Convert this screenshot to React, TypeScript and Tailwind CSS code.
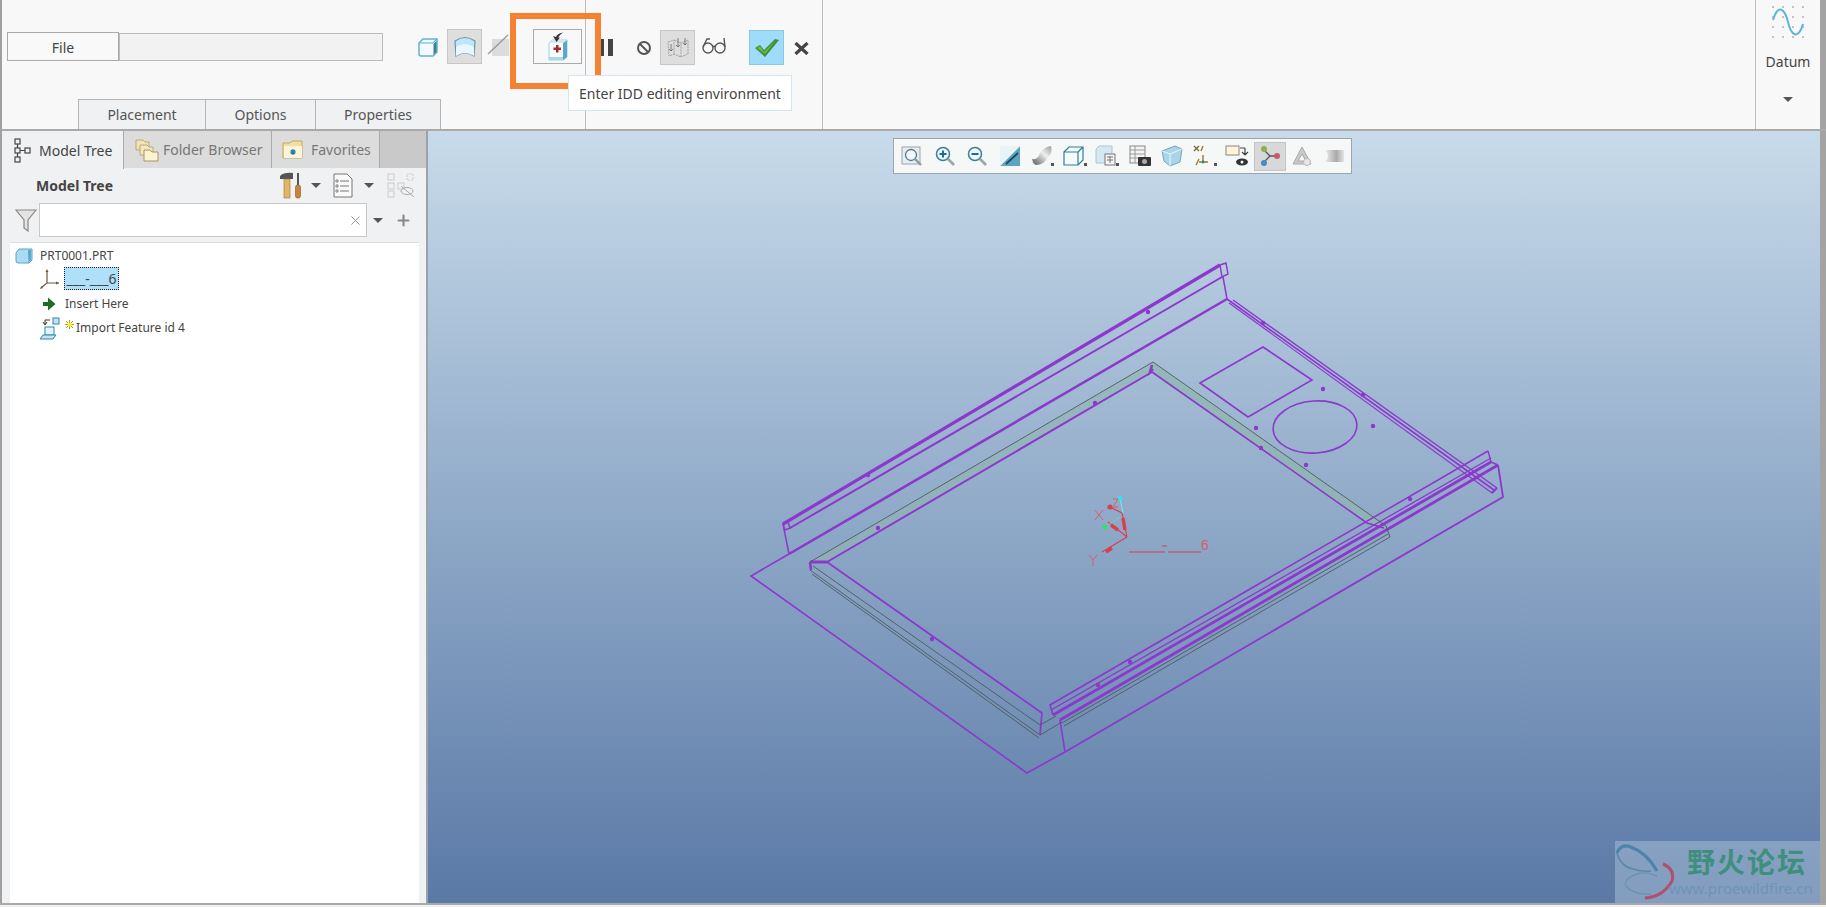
import React from 'react';
import { Plus, X } from 'lucide-react';

const font = "font-['Noto_Sans','Open_Sans',sans-serif]";

const Caret = () => <div className="w-0 h-0 border-x-[5px] border-x-transparent border-t-[5px] border-t-[#555]" />;

const CubeIcon = () => (
  <svg width="20" height="19" viewBox="0 0 20 19" fill="none">
    <path d="M1 5 L5 1 H19 V14 L15 18 H3 Q1 18 1 16 Z" fill="#f2fafd" stroke="#5fb4cf" strokeWidth="1.5" />
    <path d="M1 5 H15 L19 1" stroke="#5fb4cf" strokeWidth="1.2" />
    <path d="M15.5 6 L18.5 3 V14 L15.5 17 Z" fill="#3f7f98" />
  </svg>
);

const SurfaceIcon = () => (
  <svg width="24" height="24" viewBox="0 0 24 24" fill="none">
    <path d="M2 6 Q12 -1 22 6 L21 21 Q12 15 3 21 Z" fill="#bfe6f6" stroke="#6b97a8" strokeWidth="1.2" />
    <path d="M3 12 Q12 6 21 12 L21 21 Q12 15 3 21 Z" fill="#e9f7fc" />
  </svg>
);

const SlashIcon = () => (
  <svg width="24" height="24" viewBox="0 0 24 24" fill="none">
    <rect x="5" y="6" width="17" height="17" fill="#dcdcdc" />
    <path d="M1 21 L21 2" stroke="#9a9a9a" strokeWidth="1.4" />
  </svg>
);

const IddIcon = () => (
  <svg width="22" height="30" viewBox="0 0 22 30" fill="none">
    <path d="M2 11 L5 8 H20 V25 L17 28 H2 Z" fill="#f8fcfd" stroke="#8cc4da" strokeWidth="0.8" />
    <path d="M16 11 L20 8 V25 L16 28 Z" fill="#5aa7c7" />
    <path d="M2 25 H16 V28 H2 Z" fill="#a8d8ea" />
    <path d="M2 11 L5 8 H20 L16 11 Z" fill="#cfe9f4" />
    <path d="M6.5 15.5 h2.5 v-2.5 h2.5 v2.5 h2.5 v2.5 h-2.5 v2.5 h-2.5 v-2.5 h-2.5 Z" fill="#a8262d" />
    <path d="M16 0.5 Q10 1.5 9 5 L6 4 L9.5 10 L13 5.5 L11 5.5 Q12.5 3 16 0.5 Z" fill="#333" />
  </svg>
);

const MeshIcon = () => (
  <svg width="26" height="24" viewBox="0 0 26 24" fill="none" stroke="#8a8a8a" strokeWidth="0.7">
    <path d="M3 6 L9 4 V18 L4 20 Z M9 4 L16 7 V21 L9 18 M16 7 L23 4 V18 L16 21" strokeDasharray="2 0.8" />
    <path d="M13 2 V11 M11 9 L13 11 L15 9 M20 2 V9 M18 7 L20 9 L22 7 M6 8 V15 M4 13 L6 15 L8 13" stroke="#555" />
  </svg>
);

const Glasses = () => (
  <svg width="24" height="18" viewBox="0 0 24 18" fill="none" stroke="#555" strokeWidth="1.4">
    <circle cx="6" cy="11" r="5" />
    <circle cx="18" cy="11" r="5" />
    <path d="M11 10 Q12 8.5 13 10 M1 10 L5 2 H8 M23 10 L22 1" />
  </svg>
);

const ZoomGlass = ({ mark }: { mark?: string }) => (
  <svg width="22" height="22" viewBox="0 0 22 22" fill="none">
    <circle cx="9" cy="9" r="6.5" fill="#eef7fa" stroke="#3f8199" strokeWidth="1.5" />
    <path d="M14 14 L20 20" stroke="#9aa6ab" strokeWidth="2.6" />
    {mark === '+' && <path d="M5.5 9 H12.5 M9 5.5 V12.5" stroke="#1f6b8a" strokeWidth="2" />}
    {mark === '-' && <path d="M5.5 9 H12.5" stroke="#1f6b8a" strokeWidth="2" />}
  </svg>
);

const viewIcons: React.ReactNode[] = [
  <svg key="refit" width="22" height="22" viewBox="0 0 22 22" fill="none">
    <rect x="1" y="2" width="18" height="17" fill="#e6eef2" stroke="#9aa6ab" />
    <circle cx="10" cy="10" r="5.5" fill="#f2f8fa" stroke="#55798a" strokeWidth="1.3" />
    <path d="M14 14 L20 20" stroke="#8f9a9f" strokeWidth="2.4" />
  </svg>,
  <ZoomGlass key="in" mark="+" />,
  <ZoomGlass key="out" mark="-" />,
  <svg key="repaint" width="22" height="22" viewBox="0 0 22 22" fill="none">
    <rect x="1" y="1" width="20" height="20" fill="#f7fafb" />
    <path d="M21 1 V21 H1 Z" fill="#5aa5c2" />
    <path d="M1 1 H21 L1 21 Z" fill="#e8f3f7" />
    <path d="M7 19 L19 8" stroke="#25475a" strokeWidth="1.8" />
  </svg>,
  <svg key="shade" width="24" height="22" viewBox="0 0 24 22" fill="none">
    <defs>
      <linearGradient id="sh" x1="0" y1="1" x2="1" y2="0">
        <stop offset="0" stopColor="#555" />
        <stop offset="0.6" stopColor="#eee" />
        <stop offset="1" stopColor="#999" />
      </linearGradient>
    </defs>
    <path d="M2 14 Q8 15 10 8 Q14 2 21 1 Q23 8 18 12 Q14 20 6 20 Q3 19 2 14 Z" fill="url(#sh)" />
    <rect x="21" y="18" width="3" height="3" fill="#555" />
  </svg>,
  <svg key="cube" width="24" height="22" viewBox="0 0 24 22" fill="none" stroke="#2f7f99" strokeWidth="1.2">
    <path d="M1 7 L6 2 H20 V15 L15 20 H1 Z M1 7 H15 V20 M15 7 L20 2" fill="#f5fafc" />
    <rect x="21" y="18" width="3" height="3" fill="#555" stroke="none" />
  </svg>,
  <svg key="views" width="24" height="22" viewBox="0 0 24 22" fill="none">
    <path d="M1 4 L4 1 H17 V18 H1 Z" fill="#d3e8f1" stroke="#a8c8d6" />
    <rect x="10" y="9" width="10" height="11" fill="#f4f4f4" stroke="#777" />
    <path d="M12 12 H18 M12 15 H18 M15 11 V18" stroke="#777" />
    <rect x="21" y="18" width="3" height="3" fill="#555" />
  </svg>,
  <svg key="cam" width="22" height="22" viewBox="0 0 22 22" fill="none">
    <rect x="1" y="1" width="15" height="17" fill="#f4f4f4" stroke="#888" />
    <path d="M1 5 H16 M1 9 H16 M1 13 H16 M6 1 V18" stroke="#999" />
    <rect x="9" y="12" width="13" height="9" rx="1" fill="#333" />
    <circle cx="15.5" cy="16.5" r="2.5" fill="#aaa" />
  </svg>,
  <svg key="section" width="22" height="22" viewBox="0 0 22 22" fill="none">
    <path d="M1 6 L14 1 L21 4 L19 17 L9 21 L3 16 Z" fill="#a9d5e7" stroke="#6ea8bf" />
    <path d="M1 6 L9 9 L21 4 M9 9 L9 21" stroke="#eaf6fb" />
  </svg>,
  <svg key="axes" width="24" height="22" viewBox="0 0 24 22" fill="none" strokeWidth="1.4">
    <path d="M1 1 L6 6 M6 1 L1 6" stroke="#7a6a3a" />
    <path d="M10 1 L8 6 M3 20 L6 14 M10 10 V17 M6 17 H15" stroke="#9a7a2a" />
    <circle cx="10" cy="17" r="1.4" fill="#2f7f99" />
    <rect x="21" y="18" width="3" height="3" fill="#555" stroke="none" />
  </svg>,
  <svg key="eye" width="24" height="22" viewBox="0 0 24 22" fill="none">
    <rect x="1" y="1" width="13" height="9" fill="#fdf5d8" stroke="#888" />
    <path d="M20 3 H15 M20 3 V9 M17 7 L20 10 L23 7" stroke="#444" strokeWidth="1.2" />
    <ellipse cx="17" cy="17" rx="6" ry="3.5" fill="#333" />
    <circle cx="17" cy="17" r="1.5" fill="#fff" />
  </svg>,
  <svg key="comp" width="22" height="22" viewBox="0 0 22 22" fill="none">
    <path d="M5 5 L11 11 L17 11 M11 11 L5 17" stroke="#555" strokeWidth="1.3" />
    <circle cx="5" cy="4" r="3" fill="#8db04a" />
    <circle cx="18" cy="11" r="3" fill="#c95a68" />
    <circle cx="5" cy="18" r="3" fill="#3f8fc0" />
  </svg>,
  <svg key="tri" width="22" height="22" viewBox="0 0 22 22" fill="none">
    <path d="M11 2 L20 19 H2 Z M11 9 L15 16 H7 Z" fill="#c9c9c9" fillRule="evenodd" stroke="#aaa" />
    <circle cx="16" cy="17" r="3.5" fill="#e8e8e8" stroke="#bbb" />
  </svg>,
  <svg key="flat" width="22" height="22" viewBox="0 0 22 22" fill="none">
    <defs>
      <linearGradient id="fl" x1="0" y1="0" x2="1" y2="0">
        <stop offset="0" stopColor="#eee" />
        <stop offset="0.6" stopColor="#aaa" />
        <stop offset="1" stopColor="#e4e4e4" />
      </linearGradient>
    </defs>
    <path d="M1 5 H20 V17 H1 Q7 11 1 5 Z" fill="url(#fl)" />
  </svg>,
];

const Ribbon = () => (
  <div className="h-[131px] shrink-0 flex bg-[#f8f8f8] border-l-2 border-l-[#a0a0a0] border-b-2 border-b-[#a9a9a9] relative">
    <div className="w-[584px] shrink-0 border-r border-r-[#bdbdbd] flex flex-col">
      <div className="h-[99px] pt-[32px] pl-[5px] flex">
        <div className="w-[112px] h-[29px] border border-[#aaa] bg-[#f9f9f9] flex items-center justify-center text-[14px] text-[#444] pt-[2px]">File</div>
        <div className="w-[264px] h-[28px] mt-[1px] border border-[#bbb] bg-[#f2f2f2]" />
        <div className="flex items-start">
          <div className="ml-[35px] mt-[6px]"><CubeIcon /></div>
          <div className="ml-[9px] -mt-[3px] w-[35px] h-[35px] bg-[#dedede] border border-[#c6c6c6] flex items-center justify-center"><SurfaceIcon /></div>
          <div className="ml-[5px] mt-[1px]"><SlashIcon /></div>
          <div className="ml-[22px] -mt-[3px] w-[49px] h-[35px] border border-[#aaa] flex items-center justify-center"><IddIcon /></div>
        </div>
      </div>
      <div className="flex pl-[76px] h-[30px] text-[14px] text-[#555]">
        <div className="w-[128px] bg-[#f0f1f2] border border-b-0 border-[#b5b5b5] flex items-center justify-center">Placement</div>
        <div className="w-[110px] bg-[#f0f1f2] border-t border-r border-[#b5b5b5] flex items-center justify-center">Options</div>
        <div className="w-[125px] bg-[#f0f1f2] border-t border-r border-[#b5b5b5] flex items-center justify-center">Properties</div>
      </div>
    </div>
    <div className="w-[237px] shrink-0 border-r border-r-[#bdbdbd] flex items-start pt-[30px]">
      <div className="ml-[13px] mt-[9px] flex gap-[4px]">
        <div className="w-[5px] h-[17px] bg-[#444]" />
        <div className="w-[5px] h-[17px] bg-[#444]" />
      </div>
      <svg className="ml-[23px] mt-[10px]" width="16" height="16" viewBox="0 0 16 16" fill="none" stroke="#555" strokeWidth="2">
        <circle cx="8" cy="8" r="6" />
        <path d="M4 4 L12 12" />
      </svg>
      <div className="ml-[8px] w-[35px] h-[35px] bg-[#dedede] border border-[#c6c6c6] flex items-center justify-center"><MeshIcon /></div>
      <div className="ml-[7px] mt-[7px]"><Glasses /></div>
      <div className="ml-[23px] w-[35px] h-[35px] bg-[#9fdbfb] border border-[#8cc8e6] flex items-center justify-center">
        <svg width="26" height="22" viewBox="0 0 26 22">
          <path d="M1 11 L6 8 L10 13 L21 2 L25 3 L11 20 Z" fill="#3c8f3f" />
          <path d="M3 11 L6 9.5 L10 15 L22 3 L11 17 Z" fill="#78bb3c" />
        </svg>
      </div>
      <svg className="ml-[10px] mt-[12px]" width="15" height="13" viewBox="0 0 15 13" fill="none" stroke="#444" strokeWidth="3.2">
        <path d="M1.5 1 L13.5 12 M13.5 1 L1.5 12" />
      </svg>
    </div>
    <div className="flex-1" />
    <div className="w-[65px] shrink-0 border-l border-l-[#bdbdbd] flex flex-col items-center relative">
      <svg className="mt-[5px]" width="34" height="34" viewBox="0 0 34 34" fill="none">
        {[2, 12, 22, 32].map((x) => [2, 12, 22, 32].map((y) => <circle key={`${x}-${y}`} cx={x} cy={y} r="0.7" fill="#666" />))}
        <path d="M2 15 C7 -2 14 4 17 17 C20 30 27 36 32 19" stroke="#5cb8d6" strokeWidth="2" />
      </svg>
      <span className="mt-[12px] text-[14px] text-[#444]">Datum</span>
      <div className="mt-[25px]"><Caret /></div>
    </div>
    <div className="w-[6px] shrink-0 bg-[#a3a3a3]" />

    <div className="absolute left-[508px] top-[13px] w-[91px] h-[76px] border-[6px] border-[#f58232]" />
    <div className="absolute left-[566px] top-[75px] w-[224px] h-[36px] bg-white border border-[#d3e6ee] flex items-center pl-[10px] text-[14px] text-[#444] whitespace-nowrap">Enter IDD editing environment</div>
  </div>
);

const TreeIcon = () => (
  <svg width="17" height="25" viewBox="0 0 17 25" fill="none" stroke="#444" strokeWidth="1.2">
    <rect x="1" y="1" width="5" height="5" />
    <rect x="1" y="10" width="5" height="5" />
    <rect x="1" y="19" width="5" height="5" />
    <rect x="11" y="10" width="5" height="5" />
    <path d="M3.5 6 V10 M3.5 15 V19 M6 12.5 H11" />
  </svg>
);

const FolderIcon = () => (
  <svg width="24" height="24" viewBox="0 0 24 24">
    <path d="M1 2 H8 L10 4 H14 V12 H1 Z" fill="#f1e3b5" stroke="#b8a878" />
    <path d="M5 7 H12 L14 9 H18 V17 H5 Z" fill="#f4e7bd" stroke="#b8a878" />
    <path d="M9 12 H15 L17 14 H23 V23 H9 Z" fill="#fbf2d2" stroke="#a99461" />
  </svg>
);

const FavIcon = () => (
  <svg width="22" height="20" viewBox="0 0 22 20">
    <path d="M1 3 H8 L10 1 H20 V18 H1 Z" fill="#f2dea3" stroke="#c0a668" />
    <rect x="2" y="6" width="18" height="12" fill="#fff4d6" />
    <path d="M11 9 V15 M8 12 H14 M9 10 L13 14 M13 10 L9 14" stroke="#1d7da8" strokeWidth="1.2" />
  </svg>
);

const HammerIcon = () => (
  <svg width="23" height="27" viewBox="0 0 23 27">
    <path d="M1 4 Q5 0 14 1 V7 H1 Z" fill="#555" />
    <rect x="5" y="7" width="6" height="19" fill="#e0b56c" stroke="#9a7433" strokeWidth="0.6" />
    <rect x="18" y="1" width="2" height="12" fill="#555" />
    <rect x="16.5" y="13" width="5" height="13" rx="2" fill="#c8843c" stroke="#8a5a25" strokeWidth="0.6" />
  </svg>
);

const ListIcon = () => (
  <svg width="20" height="25" viewBox="0 0 20 25" fill="#fafafa" stroke="#777">
    <path d="M1 1 H14 L19 6 V24 H1 Z" />
    <path d="M7 8 H16 M7 13 H16 M7 18 H16" />
    <circle cx="4" cy="8" r="1.2" />
    <circle cx="4" cy="13" r="1.2" />
    <circle cx="4" cy="18" r="1.2" />
  </svg>
);

const HideIcon = () => (
  <svg width="28" height="25" viewBox="0 0 28 25" fill="none" stroke="#ccc">
    <rect x="1" y="1" width="6" height="6" />
    <rect x="1" y="10" width="6" height="6" />
    <rect x="1" y="18" width="6" height="6" />
    <rect x="11" y="10" width="6" height="6" />
    <rect x="20" y="1" width="6" height="6" strokeDasharray="2 1" />
    <ellipse cx="20" cy="18" rx="6" ry="3.5" stroke="#aaa" />
    <path d="M14 13 L27 24" stroke="#aaa" />
  </svg>
);

const SidePanel = () => (
  <div className="w-[426px] shrink-0 flex flex-col bg-[#f0f1f2] border-r-2 border-r-[#9ba3aa]">
    <div className="h-[37px] shrink-0 flex bg-[#c9c9c9] text-[14px]">
      <div className="w-[122px] -mb-px bg-[#f0f1f2] border-r border-r-[#aaa] flex items-center pl-[12px] gap-[8px] text-[#444]">
        <TreeIcon />
        Model Tree
      </div>
      <div className="w-[148px] bg-[#dcdcdc] border-r border-r-[#aaa] flex items-center pl-[11px] gap-[4px] text-[#777]">
        <FolderIcon />
        Folder Browser
      </div>
      <div className="w-[108px] bg-[#dcdcdc] border-r border-r-[#aaa] flex items-center pl-[10px] gap-[7px] text-[#777]">
        <FavIcon />
        Favorites
      </div>
    </div>
    <div className="h-[35px] shrink-0 flex items-center">
      <span className="ml-[34px] text-[14px] font-bold text-[#444]">Model Tree</span>
      <div className="ml-[166px]"><HammerIcon /></div>
      <div className="ml-[9px]"><Caret /></div>
      <div className="ml-[12px]"><ListIcon /></div>
      <div className="ml-[11px]"><Caret /></div>
      <div className="ml-[13px]"><HideIcon /></div>
    </div>
    <div className="h-[34px] shrink-0 flex items-center">
      <svg className="ml-[13px]" width="22" height="24" viewBox="0 0 22 24" fill="#e4e4e4" stroke="#888" strokeWidth="1.2">
        <path d="M1 2 H21 L13 12 V23 L9 20 V12 Z" />
      </svg>
      <div className="ml-[2px] w-[328px] h-[34px] bg-white border border-[#c8c8c8] flex items-center justify-end pr-[3px]">
        <X size={15} strokeWidth={1.4} color="#888" />
      </div>
      <div className="ml-[6px]"><Caret /></div>
      <Plus className="ml-[12px]" size={17} strokeWidth={3} color="#888" />
    </div>
    <div className="flex-1 mt-[5px] ml-[8px] mr-[7px] bg-white border-t border-t-[#ddd] text-[12px] text-[#444] pt-[3px]">
      <div className="flex items-center h-[19px] pl-[5px]">
        <svg width="18" height="16" viewBox="0 0 18 16">
          <path d="M1 5 L4 1 H17 V12 L14 15 H3 Q1 15 1 13 Z" fill="#a9dcf2" stroke="#57a6c7" />
          <path d="M13 2 H16 V12 L13.5 14.5 Z" fill="#5aa7c7" />
        </svg>
        <span className="ml-[7px]">PRT0001.PRT</span>
      </div>
      <div className="flex items-center h-[26px] pl-[29px] pt-[1px]">
        <svg width="21" height="22" viewBox="0 0 21 22" fill="none" stroke="#6b5a3a" strokeWidth="1.2">
          <path d="M8 3 V15 L2 20 M8 15 H20" />
          <path d="M8 1 L6.5 4 H9.5 Z M20 15 L17 13.5 V16.5 Z M1 21 L4 20 L2.5 18 Z" fill="#6b5a3a" stroke="none" />
        </svg>
        <div className="ml-[4px] w-[55px] h-[23px] bg-[#aee0fa] border border-dotted border-[#223] flex items-center justify-center text-[14px]">___-___6</div>
      </div>
      <div className="flex items-center h-[25px] pl-[32px]">
        <svg width="14" height="14" viewBox="0 0 14 14"><path d="M1 5 H6 V0.5 L13.5 7 L6 13.5 V9 H1 Z" fill="#1f6e1f" /></svg>
        <span className="ml-[9px]">Insert Here</span>
      </div>
      <div className="flex items-center h-[24px] pl-[29px]">
        <svg width="21" height="23" viewBox="0 0 21 23" fill="none">
          <rect x="14" y="1" width="6" height="6" fill="#bfe4f3" stroke="#2f86ad" />
          <rect x="6" y="10" width="9" height="8" fill="#e7f5fb" stroke="#2f86ad" />
          <path d="M1 22 L4 18 H17 L14 22 Z" fill="#bfe4f3" stroke="#2f86ad" />
          <path d="M11 3 H6 V7 M4 5 L6 8 L8 5" stroke="#333" />
        </svg>
        <svg className="ml-[5px] -mt-[8px]" width="9" height="9" viewBox="0 0 9 9" stroke="#a8a000" strokeWidth="1">
          <path d="M4.5 0 V9 M0 4.5 H9 M1 1 L8 8 M8 1 L1 8" />
          <circle cx="4.5" cy="4.5" r="2" fill="#f5ee2a" stroke="none" />
        </svg>
        <span className="ml-[2px]">Import Feature id 4</span>
      </div>
    </div>
  </div>
);

const PURPLE = '#8c38cc';

const dots = [
  [1323, 389], [1373, 426], [1256, 428], [1306, 465], [1263, 323], [1363, 395], [1261, 448],
  [1095, 403], [878, 528], [932, 639], [1098, 685], [1130, 662], [1410, 499], [868, 475], [1148, 312],
];

const Model = () => (
  <svg className="absolute inset-0" width="1392" height="772" viewBox="428 131 1392 772" fill="none">
    {/* green inner faces */}
    <path d="M810 562 L1153 362 L1152 372 L827 562 Z" fill="#8fb5b0" opacity="0.6" />
    <path d="M1153 362 L1386 526 L1367 523 L1150 372 Z" fill="#8fb5b0" opacity="0.75" />

    {/* upper flange */}
    <g stroke={PURPLE}>
      <path d="M783 524 L1220 265" strokeWidth="3.2" />
      <path d="M1220 265 L1226 263 L1228 274 L1222 277 Z" strokeWidth="1.4" />
      <path d="M790 528 L1222 277" strokeWidth="2" />
      <path d="M783 524 L788 522 L790 528 L785 530 Z" strokeWidth="1.4" />
      <path d="M789 554 L1227 299" strokeWidth="2.6" />
      <path d="M783 524 L789 554 M1223 277 L1227 299" strokeWidth="1.5" />

      {/* left sheet edge */}
      <path d="M789 554 L751 576 L1027 773 L1065 752" strokeWidth="1.6" />
      <path d="M1065 752 L1503 497 L1498 465" strokeWidth="1.8" />

      {/* inner frame */}
      <path d="M827 562 L1152 372" strokeWidth="2" />
      <path d="M1152 372 L1367 523 L1384 528" strokeWidth="1.6" />
      <path d="M1152 365 L1150 372 L1153 369" strokeWidth="2.6" />
      <path d="M810 562 L827 562" strokeWidth="3" />
      <path d="M810 562 L811 570" strokeWidth="2.4" />
      <path d="M827 562 L1042 713 L1040 735" strokeWidth="1.7" />

      {/* top right flange */}
      <path d="M1227 299 L1494 490" strokeWidth="1.6" />
      <path d="M1233 300 L1497 488" strokeWidth="1.4" />
      <path d="M1229 303 L1492 493" strokeWidth="1.2" />
      <path d="M1494 490 L1492 493 L1497 488" strokeWidth="2" />

      {/* lower right flange */}
      <path d="M1488 451 L1050 705 L1053 715" strokeWidth="1.6" />
      <path d="M1491 458 L1051 710" strokeWidth="1.3" />
      <path d="M1491 462 L1053 715" strokeWidth="2.8" />
      <path d="M1498 465 L1060 720" strokeWidth="2.8" />
      <path d="M1488 451 L1491 462 L1498 465" strokeWidth="1.4" />
      <path d="M1060 720 L1065 752" strokeWidth="1.6" />

      {/* cutouts */}
      <path d="M1200 383 L1263 347 L1312 380 L1248 417 Z" strokeWidth="1.6" />
      <ellipse cx="1315" cy="427" rx="42" ry="26" transform="rotate(-4 1315 427)" strokeWidth="1.6" />
    </g>

    {/* grey body lines */}
    <g stroke="#4e5a5e" strokeWidth="0.9">
      <path d="M810 562 L1153 362 L1386 526" />
      <path d="M813 566 L1040 725 M810 570 L1040 735 M812 574 L1039 738" />
      <path d="M1040 725 L1056 716 M1040 735 L1062 722 M1062 723 L1388 534 M1064 726 L1390 537" />
      <path d="M1386 526 L1390 537" />
    </g>

    {dots.map(([x, y]) => <circle key={`${x}-${y}`} cx={x} cy={y} r="2.2" fill={PURPLE} />)}

    {/* csys */}
    <g stroke="#d8404f" strokeWidth="1.2">
      <path d="M1127 537 L1122 513 L1110 507 M1127 537 L1108 522 M1127 537 L1102 552 M1129 552 L1165 552 M1168 552 L1201 552 M1162 546 H1167" />
      <path d="M1125 530 L1123 518 M1118 530 L1111 525 M1112 548 L1106 552" strokeWidth="3.4" />
    </g>
    <path d="M1120 498 L1123 513" stroke="#7fe6f0" />
    <path d="M1105 527 L1120 517" stroke="#7fd0a8" strokeWidth="0.7" />
    <circle cx="1120" cy="498" r="2.6" fill="#36e0f2" />
    <circle cx="1110" cy="507" r="2.6" fill="#d8404f" />
    <circle cx="1105" cy="527" r="2.6" fill="#30e070" />
    <g fill="none" stroke="#d8606a" strokeWidth="1">
      <path d="M1095 510 L1103 520 M1103 510 L1095 520" />
      <path d="M1089 555 L1093 560 L1097 555 M1093 560 V566" />
      <path d="M1113 499 H1118 L1113 507 H1118" />
    </g>
    <text x="1201" y="550" fontSize="14" fill="#d8606a" fontFamily="Liberation Sans, sans-serif">6</text>
  </svg>
);

const Viewport = () => (
  <div className="flex-1 relative bg-gradient-to-b from-[#c8dbea] to-[#5a79a6] overflow-hidden">
    <Model />
    <div className="absolute left-[465px] top-[7px] h-[36px] w-[459px] bg-[#f6f7f7] border border-[#9aa6ad] flex items-center pl-[2px]">
      {viewIcons.map((icon, i) => (
        <div key={i} className={`w-[32.5px] h-[29px] shrink-0 flex items-center justify-center ${i === 11 ? 'bg-[#d8d8d8] border border-[#c4c4c4]' : ''}`}>
          {icon}
        </div>
      ))}
    </div>
    <div className="absolute right-0 bottom-0 w-[205px] h-[62px] bg-[#9fb6d0]/60 flex">
      <svg className="shrink-0" width="62" height="62" viewBox="0 0 62 62" fill="none">
        <path d="M2 12 Q6 2 16 6 Q32 12 42 30" stroke="#4f82a8" strokeWidth="3" />
        <path d="M2 12 Q6 26 18 28 Q28 31 36 30" stroke="#5d88aa" strokeWidth="1.6" />
        <path d="M48 23 Q60 28 57 40 Q48 56 30 57" stroke="#b0506e" strokeWidth="3" />
        <path d="M42 35 Q30 30 22 33 Q8 38 11 45 Q18 54 36 53" stroke="#6f92b0" strokeWidth="1.5" />
      </svg>
      <div className="flex flex-col -ml-[8px]">
        <span className="pl-[18px] pt-[2px] text-[28px] leading-[36px] tracking-[2px] font-bold text-[#3f8f7f] font-['Noto_Sans_CJK_SC',sans-serif] whitespace-nowrap">野火论坛</span>
        <span className="text-[15px] leading-[18px] text-[#6f93b5] whitespace-nowrap">www.proewildfire.cn</span>
      </div>
    </div>
  </div>
);

export default function App() {
  return (
    <div className={`w-[1826px] h-[907px] flex flex-col overflow-hidden bg-[#f4f4f4] ${font}`}>
      <Ribbon />
      <div className="flex-1 flex min-h-0 border-l-2 border-l-[#a0a0a0]">
        <SidePanel />
        <Viewport />
        <div className="w-[6px] shrink-0 bg-[#a3a3a3]" />
      </div>
      <div className="h-[4px] shrink-0 bg-[#f0f0f0] border-t-2 border-t-[#a9a9a9]" />
    </div>
  );
}
